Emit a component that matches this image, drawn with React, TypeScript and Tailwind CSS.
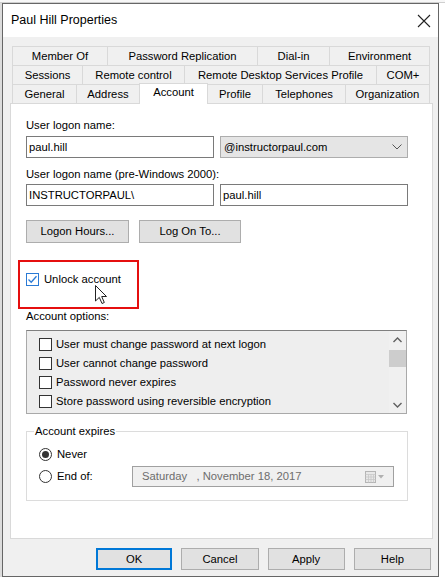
import React from "react";

const Tab = ({ w, label, selected }: { w: string; label: string; selected?: boolean }) => (
  <div
    className={
      selected
        ? `${w} relative z-10 h-[21px] mb-[-1px] bg-white border-t border-l border-r border-[#d9d9d9] flex items-start justify-center pt-[1px] text-black`
        : `${w} h-[19px] border-t border-l border-[#d9d9d9] bg-[#f0f0f0] flex items-center justify-center text-black`
    }
  >
    {label}
  </div>
);

const Box = ({ checked }: { checked?: boolean }) =>
  checked ? (
    <div className="w-[13px] h-[13px] border border-[#2a7ad5] bg-white flex items-center justify-center shrink-0">
      <svg width="11" height="11" viewBox="0 0 11 11">
        <path d="M1.5 5.5 L4.2 8.2 L9.5 2.2" fill="none" stroke="#2a7ad5" strokeWidth="1.3" />
      </svg>
    </div>
  ) : (
    <div className="w-[13px] h-[13px] border border-[#333333] bg-white shrink-0" />
  );

const Btn = ({ w, label, def }: { w: string; label: string; def?: boolean }) => (
  <div
    className={`${w} h-full flex items-center justify-center bg-[#e1e1e1] ${
      def ? "border-2 border-[#0078d7]" : "border border-[#adadad]"
    }`}
  >
    {label}
  </div>
);

export default function App() {
  return (
    <div className="w-[445px] h-[581px] bg-white overflow-hidden relative font-['Liberation_Sans',Arial,sans-serif] text-[11.25px] leading-[15px] text-black">
      <div className="h-[3px] bg-[#f7f7f7] border-b border-[#cfcfcf]" />
      <div className="flex">
        <div className="w-[2px] h-[574px] bg-[#dcdcdc]" />
        <div className="w-[437px] h-[574px] border border-[#666666] bg-[#f0f0f0] flex flex-col">
          {/* title bar */}
          <div className="h-[33px] bg-white flex items-center justify-between pl-[8px] pr-[6px]">
            <span className="text-[12.5px]">Paul Hill Properties</span>
            <svg width="14" height="14" viewBox="0 0 14 14" className="mr-[1px]">
              <path d="M1 1 L13 13 M13 1 L1 13" stroke="#222" strokeWidth="1.1" />
            </svg>
          </div>
          {/* body */}
          <div className="flex-1 px-[7px] pt-[9px]">
            <div className="ml-[2px] w-[418px]">
              <div className="flex h-[19px]">
                <Tab w="w-[95px]" label="Member Of" />
                <Tab w="w-[150px]" label="Password Replication" />
                <Tab w="w-[72px]" label="Dial-in" />
                <Tab w="w-[101px] border-r" label="Environment" />
              </div>
              <div className="flex h-[19px]">
                <Tab w="w-[70px]" label="Sessions" />
                <Tab w="w-[102px]" label="Remote control" />
                <Tab w="w-[192px]" label="Remote Desktop Services Profile" />
                <Tab w="w-[54px] border-r" label="COM+" />
              </div>
              <div className="flex h-[19px] items-end">
                <Tab w="w-[64px]" label="General" />
                <Tab w="w-[63px]" label="Address" />
                <Tab w="w-[69px]" label="Account" selected />
                <Tab w="w-[54px] border-l-0" label="Profile" />
                <Tab w="w-[83px]" label="Telephones" />
                <Tab w="w-[85px] border-r" label="Organization" />
              </div>
            </div>
            {/* panel */}
            <div className="w-[423px] h-[436px] bg-white border border-[#d9d9d9] px-[15px] relative">
              <div className="mt-[14px]">User logon name:</div>
              <div className="mt-[3px] flex gap-[6px] h-[22px]">
                <div className="w-[188px] h-full border border-[#7a7a7a] flex items-center pl-[2px]">paul.hill</div>
                <div className="w-[188px] h-full border border-[#adadad] bg-[#e5e5e5] flex items-center justify-between pl-[3px] pr-[5px]">
                  <span>@instructorpaul.com</span>
                  <svg width="10" height="6" viewBox="0 0 10 6">
                    <path d="M0.5 0.5 L5 5 L9.5 0.5" fill="none" stroke="#555" strokeWidth="1" />
                  </svg>
                </div>
              </div>
              <div className="mt-[9px]">User logon name (pre-Windows 2000):</div>
              <div className="mt-[2px] flex gap-[6px] h-[22px]">
                <div className="w-[188px] h-full border border-[#7a7a7a] flex items-center pl-[2px]">INSTRUCTORPAUL\</div>
                <div className="w-[188px] h-full border border-[#7a7a7a] flex items-center pl-[2px]">paul.hill</div>
              </div>
              <div className="mt-[14px] flex gap-[10px] h-[23px]">
                <Btn w="w-[103px]" label="Logon Hours..." />
                <Btn w="w-[102px]" label="Log On To..." />
              </div>
              <div className="mt-[17px] ml-[-8px] w-[121px] h-[49px] border-2 border-[#e50f0f] pt-[10px] pl-[6px]">
                <div className="flex items-center gap-[5px]">
                  <Box checked />
                  <span>Unlock account</span>
                </div>
              </div>
              <div>Account options:</div>
              <div className="mt-[6px] w-[381px] h-[84px] border border-[#a9a9a9] border-t-[#7f7f7f] bg-[#eeeeee] flex">
                <div className="flex-1 pl-[12px] pt-[4px]">
                  {[
                    "User must change password at next logon",
                    "User cannot change password",
                    "Password never expires",
                    "Store password using reversible encryption",
                  ].map((t) => (
                    <div key={t} className="h-[19px] flex items-center gap-[4px]">
                      <Box />
                      <span>{t}</span>
                    </div>
                  ))}
                </div>
                <div className="w-[17px] h-full bg-[#f0f0f0] flex flex-col">
                  <div className="h-[17px] flex items-center justify-center">
                    <svg width="9" height="6" viewBox="0 0 9 6">
                      <path d="M0.5 5 L4.5 1 L8.5 5" fill="none" stroke="#606060" strokeWidth="1.4" />
                    </svg>
                  </div>
                  <div className="mt-[2px] h-[17px] bg-[#cdcdcd]" />
                  <div className="flex-1" />
                  <div className="h-[17px] flex items-center justify-center">
                    <svg width="9" height="6" viewBox="0 0 9 6">
                      <path d="M0.5 1 L4.5 5 L8.5 1" fill="none" stroke="#606060" strokeWidth="1.4" />
                    </svg>
                  </div>
                </div>
              </div>
              <fieldset className="mt-[10px] w-[382px] h-[77px] border border-[#dcdcdc] pl-[12px] pt-[6px]">
                <legend className="ml-[-5px] px-[1px]">Account expires</legend>
                <div className="h-[19px] flex items-center gap-[5px]">
                  <div className="w-[13px] h-[13px] rounded-full border border-[#333333] flex items-center justify-center">
                    <div className="w-[7px] h-[7px] rounded-full bg-[#333333]" />
                  </div>
                  <span>Never</span>
                </div>
                <div className="mt-[2px] h-[21px] flex items-center">
                  <div className="w-[93px] flex items-center gap-[5px]">
                    <div className="w-[13px] h-[13px] rounded-full border border-[#333333]" />
                    <span>End of:</span>
                  </div>
                  <div className="w-[262px] h-full border border-[#a0a0a0] bg-[#f0f0f0] flex items-center justify-between pl-[9px] pr-[9px] text-[#6d6d6d]">
                    <span className="whitespace-pre">Saturday   , November 18, 2017</span>
                    <div className="flex items-center gap-[2px]">
                      <svg width="11" height="12" viewBox="0 0 11 12">
                        <rect x="0.5" y="0.5" width="10" height="11" fill="#e8e8e8" stroke="#b5b5b5" />
                        <path d="M0.5 3.5 H10.5 M0.5 6 H10.5 M0.5 8.5 H10.5 M3.5 3.5 V11.5 M6 3.5 V11.5 M8.5 3.5 V11.5" stroke="#c8c8c8" strokeWidth="0.8" />
                      </svg>
                      <svg width="6" height="4" viewBox="0 0 6 4">
                        <path d="M0 0 H6 L3 3.5 Z" fill="#b0b0b0" />
                      </svg>
                    </div>
                  </div>
                </div>
              </fieldset>
            </div>
            {/* buttons */}
            <div className="mt-[9px] ml-[86px] h-[22px] flex gap-[9px]">
              <Btn w="w-[77px]" label="OK" def />
              <Btn w="w-[78px]" label="Cancel" />
              <Btn w="w-[78px]" label="Apply" />
              <Btn w="w-[78px]" label="Help" />
            </div>
          </div>
        </div>
      </div>
      {/* mouse cursor */}
      <svg className="absolute left-[95px] top-[285px]" width="13" height="20" viewBox="0 0 13 20">
        <path d="M0.5 0.5 L0.5 16 L4.3 12.4 L7 18.5 L9.3 17.5 L6.7 11.5 L11.5 11.5 Z" fill="white" stroke="#222" strokeWidth="1" strokeLinejoin="round" />
      </svg>
    </div>
  );
}
